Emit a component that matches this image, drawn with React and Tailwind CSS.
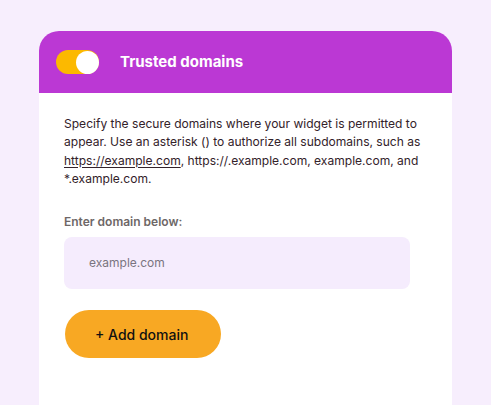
export default function App() {
  return (
    <div
      className="w-[491px] h-[405px] overflow-hidden bg-[#f7eefd] pt-[31px] pl-[39px]"
      style={{ fontFamily: "Inter, 'Noto Sans', sans-serif" }}
    >
      <div className="w-[413px] h-[400px] bg-white rounded-t-[20px] overflow-hidden">
        {/* Header */}
        <div className="h-[62px] bg-[#bb38d4] flex items-center pl-[17px]">
          <div className="w-[43px] h-[24px] rounded-full bg-[#fcb900] flex items-center justify-end">
            <div className="w-[23px] h-[23px] rounded-full bg-white" />
          </div>
          <span className="ml-[21px] text-white font-bold text-[15px]">Trusted domains</span>
        </div>

        {/* Body */}
        <div className="px-[25px] pt-[22px]">
          <p className="text-[12.05px] leading-[18.3px] text-[#33222a] whitespace-nowrap">
            Specify the secure domains where your widget is permitted to
            <br />
            appear. Use an asterisk () to authorize all subdomains, such as
            <br />
            <span className="underline underline-offset-2">https://example.com</span>, https://.example.com,
            example.com, and
            <br />
            *.example.com.
          </p>

          <div className="mt-[25px] text-[12px] font-semibold text-[#6e6767]">Enter domain below:</div>

          <div className="mt-[6px] w-[346px] h-[52px] rounded-[8px] bg-[#f5ecfd] flex items-center pl-[25px]">
            <span className="text-[12px] text-[#7a7480]">example.com</span>
          </div>

          <button className="mt-[21px] ml-px w-[156px] h-[48px] rounded-full bg-[#f8a823] flex items-center pl-[30px] text-[14px] font-medium text-[#111]">
            + Add domain
          </button>
        </div>
      </div>
    </div>
  );
}
